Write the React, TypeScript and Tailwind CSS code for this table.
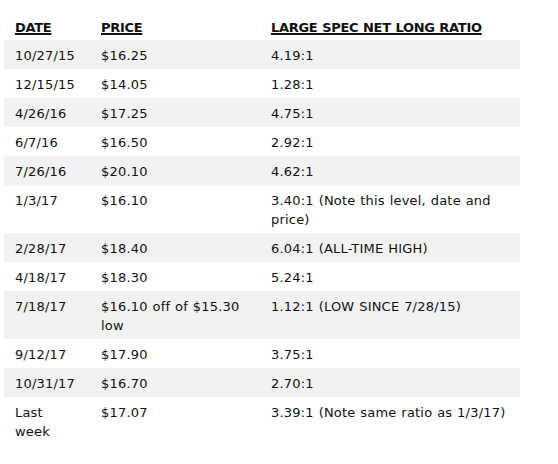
const rows = [
  { date: "10/27/15", price: "$16.25", ratio: "4.19:1" },
  { date: "12/15/15", price: "$14.05", ratio: "1.28:1" },
  { date: "4/26/16", price: "$17.25", ratio: "4.75:1" },
  { date: "6/7/16", price: "$16.50", ratio: "2.92:1" },
  { date: "7/26/16", price: "$20.10", ratio: "4.62:1" },
  { date: "1/3/17", price: "$16.10", ratio: "3.40:1 (Note this level, date and price)" },
  { date: "2/28/17", price: "$18.40", ratio: "6.04:1 (ALL-TIME HIGH)" },
  { date: "4/18/17", price: "$18.30", ratio: "5.24:1" },
  { date: "7/18/17", price: "$16.10 off of $15.30 low", ratio: "1.12:1 (LOW SINCE 7/28/15)" },
  { date: "9/12/17", price: "$17.90", ratio: "3.75:1" },
  { date: "10/31/17", price: "$16.70", ratio: "2.70:1" },
  { date: "Last week", price: "$17.07", ratio: "3.39:1 (Note same ratio as 1/3/17)" },
];

const App = () => {
  return (
    <div className="min-h-[464px] bg-white pt-[12px] pl-[4px] text-[13px] leading-[19px] text-[#111] tracking-[0.2px] [word-spacing:0.5px] [font-family:'DejaVu_Sans',Verdana,sans-serif]">
      <table className="w-[516px] table-fixed border-collapse">
        <colgroup>
          <col className="w-[86px]" />
          <col className="w-[170px]" />
          <col className="w-[260px]" />
        </colgroup>
        <thead>
          <tr>
            {["DATE", "PRICE", "LARGE SPEC NET LONG RATIO"].map((h) => (
              <th
                key={h}
                className="pl-[11px] pr-[10px] pt-[6px] pb-[3px] text-left align-top font-bold tracking-[-0.3px] underline decoration-2 underline-offset-[1px]"
              >
                {h}
              </th>
            ))}
          </tr>
        </thead>
        <tbody>
          {rows.map((r, i) => (
            <tr key={r.date} className={i % 2 === 0 ? "bg-[#f2f2f2]" : "bg-white"}>
              <td className="pl-[11px] pr-[10px] pt-[6px] pb-[4px] align-top">{r.date}</td>
              <td className="pl-[11px] pr-[10px] pt-[6px] pb-[4px] align-top">{r.price}</td>
              <td className="pl-[11px] pr-[10px] pt-[6px] pb-[4px] align-top">{r.ratio}</td>
            </tr>
          ))}
        </tbody>
      </table>
    </div>
  );
};

export default App;
